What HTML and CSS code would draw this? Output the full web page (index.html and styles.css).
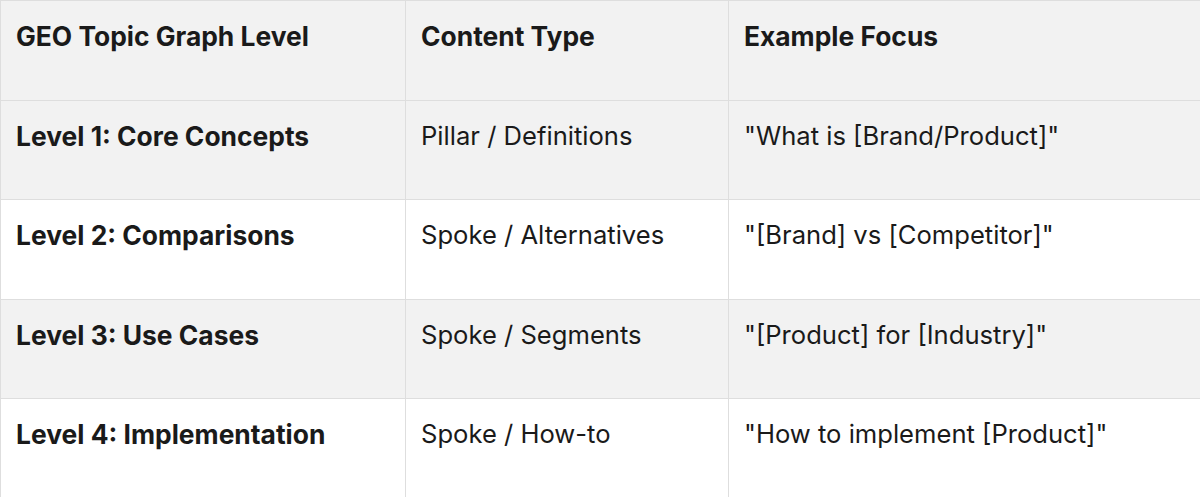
FILE: index.html
```html
<!DOCTYPE html>
<html>
<head>
<meta charset="utf-8">
<link rel="stylesheet" href="styles.css">
</head>
<body>
<table class="topic-table">
  <colgroup>
    <col class="col-level">
    <col class="col-type">
    <col class="col-focus">
  </colgroup>
  <thead>
    <tr class="row row-head">
      <th>GEO Topic Graph Level</th>
      <th>Content Type</th>
      <th>Example Focus</th>
    </tr>
  </thead>
  <tbody>
    <tr class="row row-shaded">
      <td class="strong">Level 1: Core Concepts</td>
      <td>Pillar / Definitions</td>
      <td>"What is [Brand/Product]"</td>
    </tr>
    <tr class="row">
      <td class="strong">Level 2: Comparisons</td>
      <td>Spoke / Alternatives</td>
      <td>"[Brand] vs [Competitor]"</td>
    </tr>
    <tr class="row row-shaded">
      <td class="strong">Level 3: Use Cases</td>
      <td>Spoke / Segments</td>
      <td>"[Product] for [Industry]"</td>
    </tr>
    <tr class="row">
      <td class="strong">Level 4: Implementation</td>
      <td>Spoke / How-to</td>
      <td>"How to implement [Product]"</td>
    </tr>
  </tbody>
</table>
</body>
</html>
```
FILE: styles.css
```css
html, body {
  margin: 0;
  padding: 0;
  background: #ffffff;
  overflow: hidden;
}
.topic-table {
  border-collapse: collapse;
  table-layout: fixed;
  width: 1240px;
  font-family: Inter, "Noto Sans", sans-serif;
  font-size: 25.6px;
  color: #1a1a1a;
}
.col-level { width: 405px; }
.col-type { width: 323px; }
.topic-table th,
.topic-table td {
  border: 1px solid #dedede;
  text-align: left;
  vertical-align: top;
  padding: 18px 16px 0 15px;
  height: 80.5px;
  line-height: 34px;
  box-sizing: content-box;
}
.topic-table th,
.topic-table td.strong {
  font-weight: 700;
  font-size: 26.4px;
}
.row-head,
.row-shaded {
  background: #f2f2f2;
}
```
